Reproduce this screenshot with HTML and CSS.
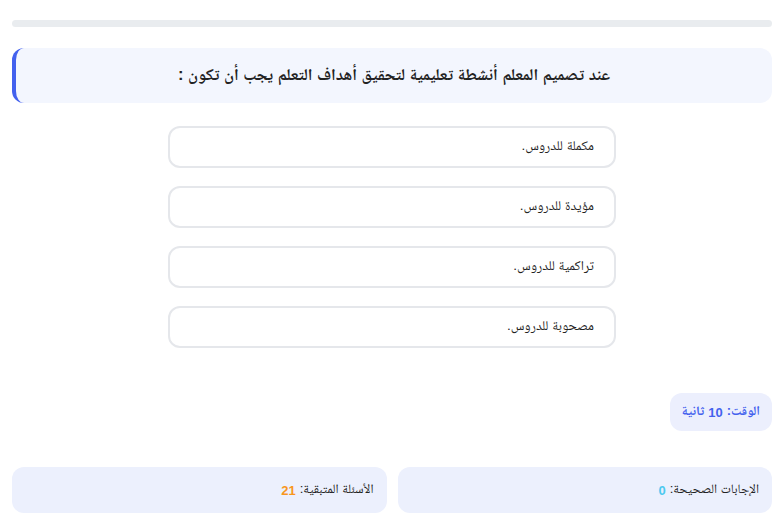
FILE: index.html
```html
<!DOCTYPE html>
<html lang="ar" dir="rtl">
<head>
    <meta charset="UTF-8">
    <meta name="viewport" content="width=device-width, initial-scale=1.0">
    <title>اختبار</title>
    <link rel="stylesheet" href="styles.css">
</head>
<body>
    <div class="quiz">
        <div class="progress"><div class="progress-fill"></div></div>

        <div class="question">عند تصميم المعلم أنشطة تعليمية لتحقيق أهداف التعلم يجب أن تكون :</div>

        <div class="options">
            <button class="option">مكملة للدروس.</button>
            <button class="option">مؤيدة للدروس.</button>
            <button class="option">تراكمية للدروس.</button>
            <button class="option">مصحوبة للدروس.</button>
        </div>

        <div class="timer-row">
            <div class="timer">الوقت: <span>10</span> ثانية</div>
        </div>

        <div class="stats">
            <div class="stat">الإجابات الصحيحة: <span class="correct">0</span></div>
            <div class="stat">الأسئلة المتبقية: <span class="left">21</span></div>
        </div>
    </div>
</body>
</html>
```

FILE: styles.css
```css
body {
    margin: 0;
    font-family: "Liberation Sans", "Noto Naskh Arabic", sans-serif;
    color: #222;
    background: #fff;
}
.quiz {
    padding: 20px 12px 18px;
}
.progress {
    height: 7px;
    background: #e9ecef;
    border-radius: 4px;
    overflow: hidden;
}
.progress-fill {
    width: 0;
    height: 100%;
    background: #4361ee;
}
.question {
    margin-top: 21px;
    height: 55px;
    display: flex;
    align-items: center;
    justify-content: center;
    background: #f3f6fe;
    border-left: 4px solid #4361ee;
    border-radius: 12px;
    font-size: 16.5px;
    font-weight: bold;
    color: #222;
}
.options {
    width: 448px;
    margin: 23px auto 0;
    display: flex;
    flex-direction: column;
    gap: 18px;
}
.option {
    height: 42px;
    padding: 0 20px;
    background: #fff;
    border: 2px solid #e5e7eb;
    border-radius: 12px;
    font-family: inherit;
    font-size: 13.5px;
    color: #222;
    text-align: right;
    cursor: pointer;
}
.timer-row {
    display: flex;
    margin-top: 45px;
}
.timer {
    height: 38px;
    padding: 0 12px;
    display: flex;
    align-items: center;
    gap: 4px;
    background: #eceffd;
    border-radius: 12px;
    color: #4361ee;
    font-size: 13px;
    font-weight: bold;
}
.stats {
    display: grid;
    grid-template-columns: 1fr 1fr;
    gap: 11px;
    margin-top: 36px;
}
.stat {
    height: 46px;
    padding: 0 13px;
    display: flex;
    align-items: center;
    gap: 4px;
    background: #ecf0fd;
    border-radius: 12px;
    font-size: 13px;
}
.correct {
    color: #4cc9f0;
    font-weight: bold;
}
.left {
    color: #f8961e;
    font-weight: bold;
}
```
